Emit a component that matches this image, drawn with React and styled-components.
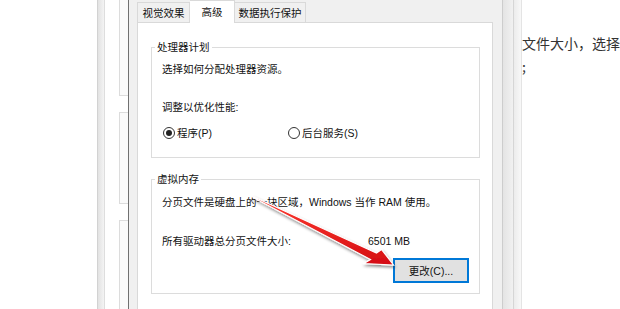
import React from "react";
import styled, { createGlobalStyle } from "styled-components";

const Global = createGlobalStyle`
  html, body { margin: 0; padding: 0; background: #fff; }
  * { box-sizing: border-box; }
`;

const UI_FONT = `"Liberation Sans", "Noto Sans CJK SC", sans-serif`;

const Root = styled.div`
  position: relative;
  width: 620px;
  height: 309px;
  overflow: hidden;
  display: flex;
  background: #fff;
  font-family: ${UI_FONT};
  font-size: 10.5px;
  color: #111;
`;

const PageLeft = styled.div`
  width: 97px;
  flex-shrink: 0;
  background: #fff;
`;

const ShadowStrip = styled.div`
  width: 8px;
  flex-shrink: 0;
  border-left: 1px solid #d2d2d2;
  border-right: 1px solid #dedede;
  background: linear-gradient(to right, #e2e2e2, #f4f4f4);
`;

const Gutter = styled.div`
  width: 23px;
  flex-shrink: 0;
  display: flex;
  flex-direction: column;
  gap: ${(p) => p.$gap}px;
  padding-left: 14px;
  background: #fff;
`;

const GhostCard = styled.div`
  height: ${(p) => p.$h}px;
  flex-shrink: 0;
  border: 1px solid #dcdcdc;
  border-right: none;
  border-top: ${(p) => (p.$open ? "none" : "1px solid #dcdcdc")};
  background: #fafafa;
`;

const Dialog = styled.div`
  width: 374px;
  flex-shrink: 0;
  display: flex;
  flex-direction: column;
  border-left: 1px solid #707070;
  background: #f0f0f0;
  padding: 0 9px 0 8px;
`;

const TabStrip = styled.div`
  height: 26px;
  display: flex;
  align-items: flex-end;
`;

const Tab = styled.div`
  position: relative;
  width: ${(p) => p.$w}px;
  height: ${(p) => (p.$active ? 23 : 20)}px;
  margin-bottom: ${(p) => (p.$active ? -1 : 0)}px;
  z-index: ${(p) => (p.$active ? 1 : 0)};
  display: flex;
  align-items: center;
  justify-content: center;
  border: 1px solid #d9d9d9;
  border-bottom: none;
  border-left: ${(p) => (p.$joined ? "none" : "1px solid #d9d9d9")};
  background: ${(p) => (p.$active ? "#fff" : "#f0f0f0")};
  line-height: 14px;
  white-space: nowrap;
`;

const Panel = styled.div`
  width: 356px;
  min-height: 292px;
  border: 1px solid #d9d9d9;
  background: #fff;
  display: flex;
  flex-direction: column;
`;

const Group = styled.fieldset`
  margin: ${(p) => p.$mt}px 12px 0 13px;
  padding: ${(p) => p.$pt}px 10px ${(p) => p.$pb}px 10px;
  border: 1px solid #dcdcdc;
  min-width: 0;
`;

const Legend = styled.legend`
  margin-left: -7px;
  padding: 0 2px;
  line-height: 14px;
`;

const Line = styled.div`
  line-height: 14px;
  margin-top: ${(p) => p.$mt || 0}px;
  white-space: nowrap;
  display: flex;
`;

const Label = styled.span`
  width: ${(p) => p.$w}px;
  flex-shrink: 0;
`;

const RadioRow = styled.div`
  display: flex;
  margin-top: ${(p) => p.$mt}px;
  line-height: 14px;
`;

const RadioItem = styled.label`
  display: flex;
  align-items: center;
  gap: 2px;
  width: ${(p) => (p.$w ? `${p.$w}px` : "auto")};
  padding-left: 1px;
`;

const RadioDot = styled.span`
  width: 12px;
  height: 12px;
  border-radius: 50%;
  border: 1px solid #333;
  background: #fff;
  display: flex;
  align-items: center;
  justify-content: center;
  &::after {
    content: "";
    width: 6px;
    height: 6px;
    border-radius: 50%;
    background: ${(p) => (p.$checked ? "#222" : "transparent")};
  }
`;

const ButtonRow = styled.div`
  display: flex;
  justify-content: flex-end;
  margin-top: 10px;
`;

const Button = styled.button`
  width: 76px;
  height: 25px;
  font-family: ${UI_FONT};
  font-size: 10.5px;
  color: #111;
  background: #e1e1e1;
  border: 1px solid #0078d7;
  box-shadow: inset 0 0 0 1px #0078d7;
  padding: 0;
`;

const RightShadow = styled.div`
  width: 20px;
  flex-shrink: 0;
  display: flex;
`;

const ShadowBand = styled.div`
  width: ${(p) => p.$w}px;
  border-left: 1px solid ${(p) => p.$line};
  background: linear-gradient(to right, ${(p) => p.$from}, ${(p) => p.$to});
`;

const PageRight = styled.div`
  flex: 1;
  background: #fff;
  padding-top: 32px;
`;

const Para = styled.p`
  margin: 0;
  font-family: "Noto Sans CJK SC", sans-serif;
  font-size: 14px;
  line-height: 23px;
  color: #333;
  white-space: nowrap;
`;

const ArrowLayer = styled.svg`
  position: absolute;
  left: 0;
  top: 0;
  pointer-events: none;
  overflow: visible;
`;

const ARROW_POINTS = [
  [253, 196.5],
  [376.5, 253],
  [381.5, 249.5],
  [393.5, 265],
  [364, 263.5],
  [370.5, 259.5],
  [253, 197.5],
];

function Arrow() {
  const d = ARROW_POINTS.map((p) => p.join(",")).join(" ");
  return (
    <ArrowLayer width="620" height="309" viewBox="0 0 620 309">
      <defs>
        <filter id="sh" x="-20%" y="-20%" width="140%" height="140%">
          <feDropShadow dx="1" dy="2" stdDeviation="1.4" floodColor="#000" floodOpacity="0.45" />
        </filter>
        <linearGradient id="rg" x1="0" y1="0" x2="0" y2="1">
          <stop offset="0" stopColor="#ff3b30" />
          <stop offset="1" stopColor="#d40d12" />
        </linearGradient>
      </defs>
      <polygon points={d} fill="url(#rg)" stroke="#fff" strokeWidth="1.2" strokeLinejoin="miter" filter="url(#sh)" />
    </ArrowLayer>
  );
}

export default function App() {
  return (
    <>
      <Global />
      <Root>
        <PageLeft />
        <ShadowStrip />
        <Gutter $gap={16}>
          <GhostCard $h={96} $open />
          <GhostCard $h={92} />
          <GhostCard $h={120} />
        </Gutter>
        <Dialog>
          <TabStrip>
            <Tab $w={53}>视觉效果</Tab>
            <Tab $w={45} $active $joined>高级</Tab>
            <Tab $w={71} $joined>数据执行保护</Tab>
          </TabStrip>
          <Panel>
            <Group $mt={17} $pt={8} $pb={17}>
              <Legend>处理器计划</Legend>
              <Line>选择如何分配处理器资源。</Line>
              <Line $mt={24}>调整以优化性能:</Line>
              <RadioRow $mt={12}>
                <RadioItem $w={125}>
                  <RadioDot $checked />
                  程序(P)
                </RadioItem>
                <RadioItem>
                  <RadioDot />
                  后台服务(S)
                </RadioItem>
              </RadioRow>
            </Group>
            <Group $mt={14} $pt={9} $pb={10}>
              <Legend>虚拟内存</Legend>
              <Line>分页文件是硬盘上的一块区域，Windows 当作 RAM 使用。</Line>
              <Line $mt={25}>
                <Label $w={206}>所有驱动器总分页文件大小:</Label>
                <span>6501 MB</span>
              </Line>
              <ButtonRow>
                <Button>更改(C)...</Button>
              </ButtonRow>
            </Group>
          </Panel>
        </Dialog>
        <RightShadow>
          <ShadowBand $w={11} $line="#cdcdcd" $from="#e4e4e4" $to="#f1f1f1" />
          <ShadowBand $w={8} $line="#d6d6d6" $from="#ececec" $to="#f8f8f8" />
          <ShadowBand $w={1} $line="#e4e4e4" $from="#fff" $to="#fff" />
        </RightShadow>
        <PageRight>
          <Para>
            文件大小，选择
            <br />;
          </Para>
        </PageRight>
        <Arrow />
      </Root>
    </>
  );
}
